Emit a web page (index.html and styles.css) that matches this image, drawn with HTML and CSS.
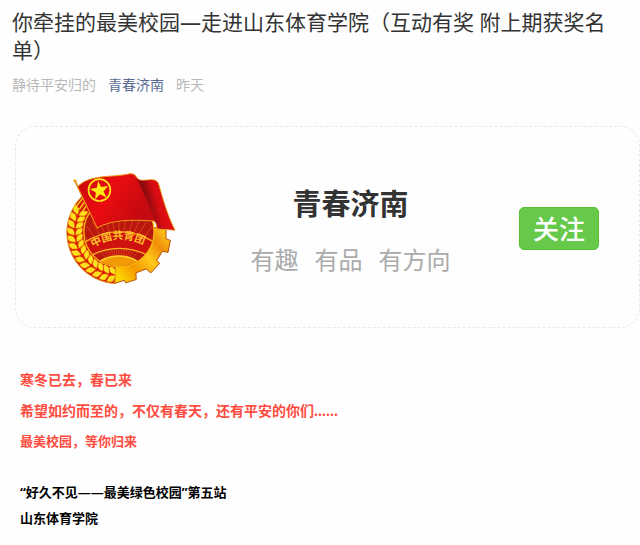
FILE: index.html
```html
<!DOCTYPE html>
<html lang="zh-CN">
<head>
    <meta charset="UTF-8">
    <meta name="viewport" content="width=device-width, initial-scale=1.0">
    <title>青春济南</title>
    <link rel="stylesheet" href="styles.css">
</head>
<body>
    <header class="article-header">
        <h1>你牵挂的最美校园—走进山东体育学院（互动有奖 附上期获奖名单）</h1>
        <div class="meta">
            <span>静待平安归的</span>
            <a href="#">青春济南</a>
            <span>昨天</span>
        </div>
    </header>

    <!-- Follow card -->
    <section class="card">
        <svg class="emblem" viewBox="48 34 332 340" role="img" aria-label="团徽">
            <defs>
                <linearGradient id="flag" x1="0" y1="0" x2="0.8" y2="0.3">
                    <stop offset="0" stop-color="#c80a10"/>
                    <stop offset="0.5" stop-color="#ea0c10"/>
                    <stop offset="1" stop-color="#c40a10"/>
                </linearGradient>
                <linearGradient id="fold" gradientUnits="userSpaceOnUse" x1="268" y1="130" x2="350" y2="108">
                    <stop offset="0" stop-color="#c80c10"/>
                    <stop offset="0.3" stop-color="#8a0c10"/>
                    <stop offset="0.65" stop-color="#d80c12"/>
                    <stop offset="1" stop-color="#e01015"/>
                </linearGradient>
                <linearGradient id="gold" gradientUnits="userSpaceOnUse" x1="190" y1="350" x2="360" y2="210">
                    <stop offset="0" stop-color="#ffe000"/>
                    <stop offset="0.3" stop-color="#f49a00"/>
                    <stop offset="0.55" stop-color="#ffc81c"/>
                    <stop offset="0.75" stop-color="#f08c08"/>
                    <stop offset="1" stop-color="#ffd21c"/>
                </linearGradient>
                <clipPath id="inner"><circle cx="208" cy="214" r="104"/></clipPath>
                <path id="arc" d="M130 262 Q208 213 292 258"/>
                <g id="leaf">
                    <path d="M198 79 L203 63 Q211 56 222 60 L217 74 Q211 80 198 79 Z"/>
                    <path d="M198 84 L203 99 Q211 106 220 103 L216 89 Q210 82 198 84 Z"/>
                </g>
            </defs>
            <!-- gear -->
            <path d="M195 370 L200 214 L300 200 L350 204 L350 235 L363 240 L356 276 L339 273 L322 300 L331 309 L304 338 L290 326 L259 338 L260 358 L228 368 L224 360 Z" fill="url(#gold)" stroke="#b5500c" stroke-width="3"/>
            <!-- wheat -->
            <path d="M106 98 A154 154 0 0 0 195 370 L198 214 Z" fill="#d81c06" stroke="#e08a10" stroke-width="3"/>
            <g fill="#ffe01c" stroke="#f0a010" stroke-width="1">
                <use href="#leaf" transform="rotate(188 207 213)"/>
                <use href="#leaf" transform="rotate(197 207 213)"/>
                <use href="#leaf" transform="rotate(206 207 213)"/>
                <use href="#leaf" transform="rotate(215 207 213)"/>
                <use href="#leaf" transform="rotate(224 207 213)"/>
                <use href="#leaf" transform="rotate(233 207 213)"/>
                <use href="#leaf" transform="rotate(242 207 213)"/>
                <use href="#leaf" transform="rotate(251 207 213)"/>
                <use href="#leaf" transform="rotate(260 207 213)"/>
                <use href="#leaf" transform="rotate(269 207 213)"/>
                <use href="#leaf" transform="rotate(278 207 213)"/>
                <use href="#leaf" transform="rotate(287 207 213)"/>
                <use href="#leaf" transform="rotate(296 207 213)"/>
            </g>
            <path d="M76 142 L102 108 M88 146 L107 119 M99 151 L113 130" stroke="#ffd51c" stroke-width="4"/>
            <!-- inner disc -->
            <circle cx="208" cy="214" r="106" fill="#b9180e"/>
            <g clip-path="url(#inner)">
                <path d="M208 330 L95 220 M208 330 L108 194 M208 330 L126 180 M208 330 L145 170 M208 330 L165 165 M208 330 L186 160 M208 330 L208 158 M208 330 L230 160 M208 330 L252 165 M208 330 L273 170 M208 330 L292 180 M208 330 L310 195 M208 330 L324 218" stroke="#dd3c16" stroke-width="3"/>
                <path d="M105 245 Q208 182 314 245 L298 286 Q208 242 122 286 Z" fill="#cf120d" stroke="#ffb41e" stroke-width="4"/>
                <ellipse cx="207" cy="325" rx="68" ry="38" fill="#f39a08" stroke="#ffd42a" stroke-width="5"/>
            </g>
            <circle cx="208" cy="214" r="106" fill="none" stroke="#f8b813" stroke-width="4"/>
            <text class="emblem-text"><textPath href="#arc">中国共青团</textPath></text>
            <!-- flag -->
            <path d="M74 58 L145 204" stroke="#d89012" stroke-width="5"/>
            <circle cx="75" cy="60" r="5" fill="#f0a418"/>
            <path d="M83 78 C119 39 190 51 239 39 C263 36 256 53 273 58 C294 61 318 49 327 68 C337 101 351 159 377 209 L325 205 C318 195 324 183 310 181 C250 177 185 177 142 202 Z" fill="url(#flag)" stroke="#ed9914" stroke-width="3"/>
            <path d="M258 51 C263 55 267 57 273 59 C294 62 317 51 325 69 C335 102 349 159 374 207 L326 203 C308 150 287 105 258 51 Z" fill="url(#fold)"/>
            <circle cx="149" cy="88" r="33" fill="none" stroke="#ffe316" stroke-width="5"/>
            <path d="M145 61 L154 79 L175 76 L161 92 L171 111 L151 101 L136 116 L138 95 L120 85 L141 81 Z" fill="#ffea17"/>
        </svg>
        <div class="account">
            <h2>青春济南</h2>
            <p><span>有趣</span><span>有品</span><span>有方向</span></p>
        </div>
        <button type="button" class="follow-btn">关注</button>
    </section>

    <main class="content">
        <div class="intro">
            <p class="lead">寒冬已去，春已来</p>
            <p class="lead">希望如约而至的，不仅有春天，还有平安的你们……</p>
            <p>最美校园，等你归来</p>
        </div>
        <div class="station">
            <p>“好久不见——最美绿色校园”第五站</p>
            <p>山东体育学院</p>
        </div>
    </main>
</body>
</html>
```
FILE: styles.css
```css
body {
    font-family: "Noto Sans", "Noto Sans CJK SC", sans-serif;
    margin: 0;
    padding: 8px 0 12px;
    background-color: #fefefe;
    color: #333;
}
h1, h2, p {
    margin: 0;
}
.article-header {
    padding: 0 12px;
}
h1 {
    font-size: 21px;
    font-weight: 400;
    line-height: 28px;
}
.meta {
    display: flex;
    gap: 12px;
    margin-top: 11px;
    font-size: 14px;
    line-height: 20px;
    color: #b8b8b8;
}
.meta a {
    color: #576b95;
    text-decoration: none;
}
/* follow card */
.card {
    display: flex;
    align-items: center;
    min-height: 202px;
    margin: 31px 0 0 15px;
    padding: 2px 40px 0 50px;
    border: 1px dashed #e8e8e8;
    border-radius: 20px;
    box-sizing: border-box;
}
.emblem {
    width: 110px;
    height: 113px;
}
.emblem-text {
    font-family: "Noto Sans CJK SC", sans-serif;
    font-size: 32px;
    font-weight: 700;
    fill: #ffc02a;
}
.account {
    flex: 1;
    padding: 6px 0 0 6px;
    text-align: center;
}
.account h2 {
    font-size: 29px;
    font-weight: 700;
    line-height: 40px;
}
.account p {
    display: flex;
    justify-content: center;
    gap: 16px;
    margin-top: 18px;
    font-size: 24px;
    line-height: 36px;
    color: #aaa;
}
.follow-btn {
    width: 80px;
    height: 43px;
    padding: 0;
    border: 1px solid #55c22d;
    border-radius: 5px;
    background-color: #66c94a;
    color: #fff;
    font-family: "Noto Sans CJK SC", sans-serif;
    font-size: 26px;
    font-weight: 500;
    line-height: 40px;
    cursor: pointer;
}
/* article text */
.content {
    padding: 36px 20px 0;
    font-size: 13px;
    font-weight: 700;
}
.intro {
    color: #ff4c41;
    line-height: 31px;
}
.lead {
    font-size: 14px;
}
.station {
    margin-top: 22px;
    color: #000;
    line-height: 26px;
}
```
